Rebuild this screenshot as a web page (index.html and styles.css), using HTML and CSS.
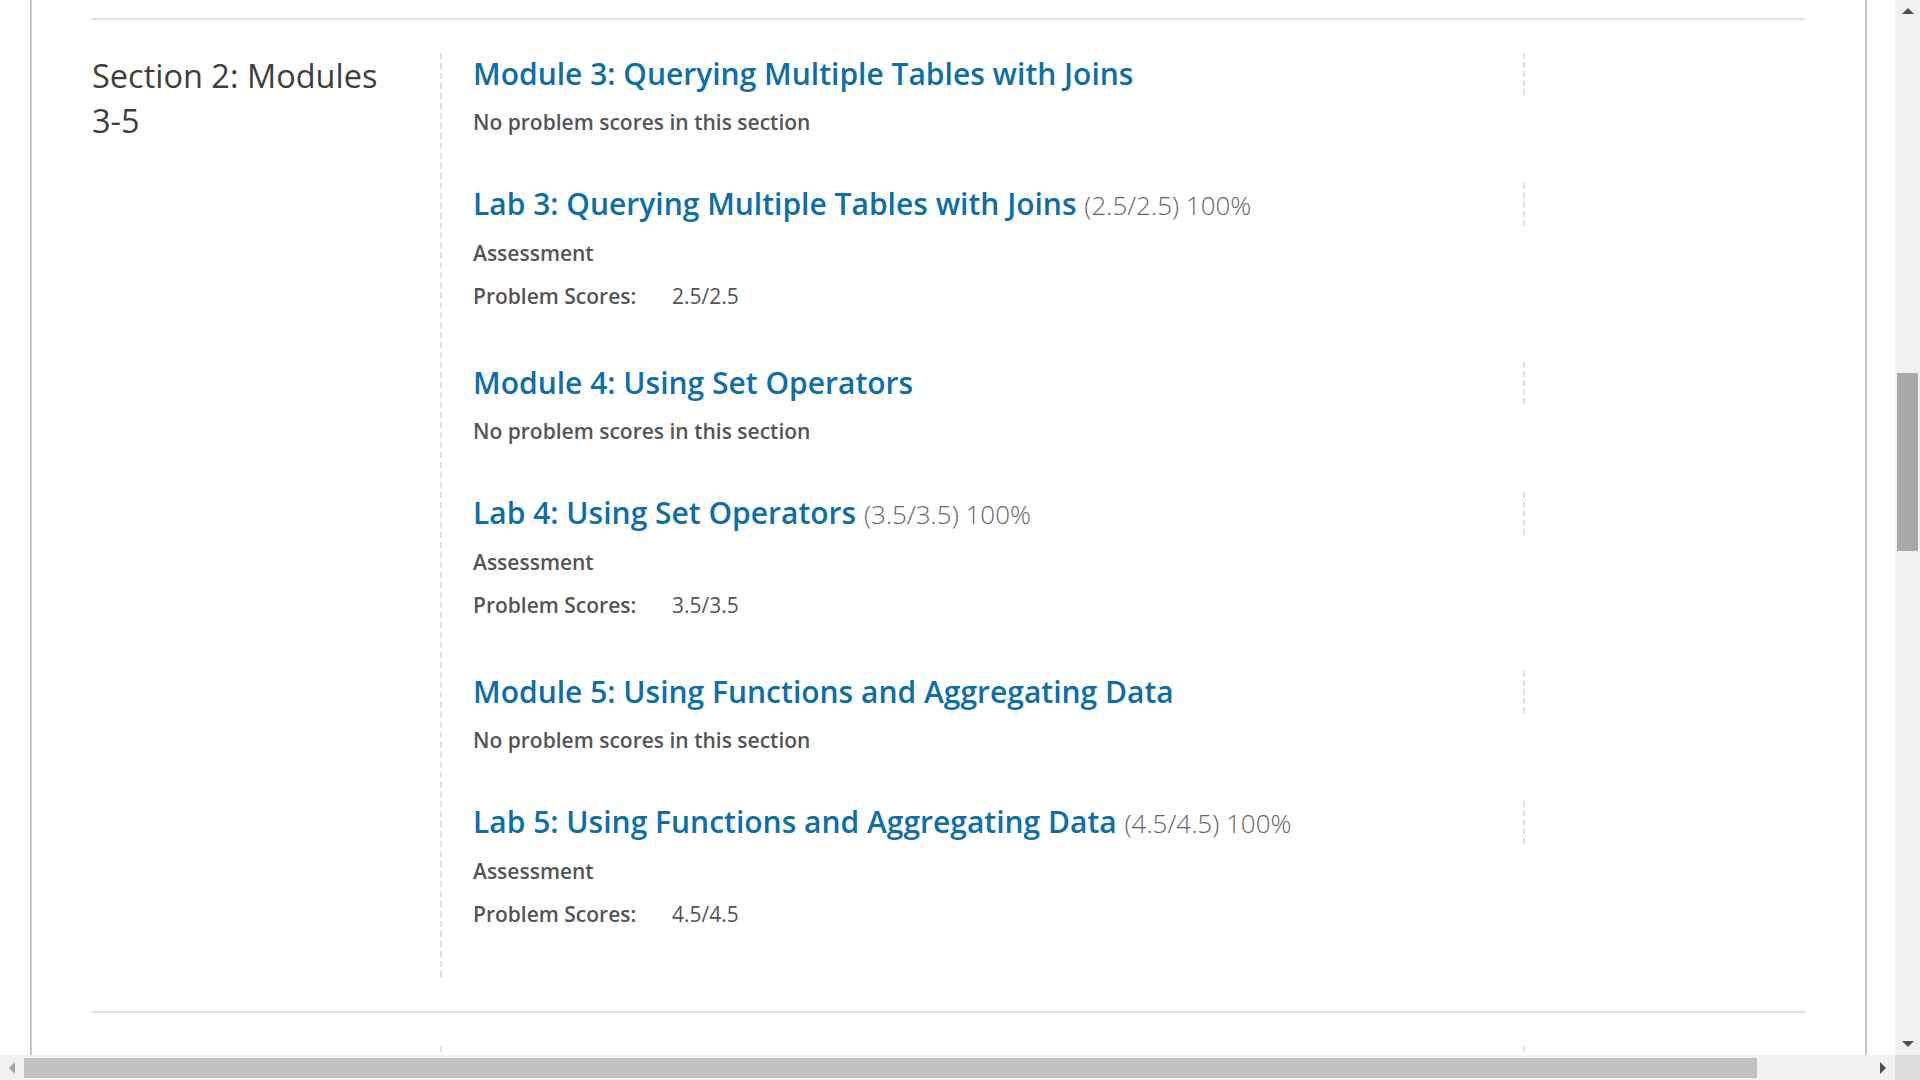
FILE: index.html
```html
<!DOCTYPE html>
<html lang="en">
<head>
<meta charset="utf-8">
<title>Progress</title>
<link rel="stylesheet" href="styles.css">
</head>
<body>
<div class="viewport">
  <div class="page">
    <hr class="rule">
    <section class="chapter">
      <h2 class="chapter-title">Section 2: Modules 3-5</h2>
      <div class="sections">
        <div class="item module">
          <h3 class="item-head"><a href="#">Module 3: Querying Multiple Tables with Joins</a></h3>
          <p class="label">No problem scores in this section</p>
        </div>
        <div class="item lab">
          <h3 class="item-head"><a href="#">Lab 3: Querying Multiple Tables with Joins</a> <span class="score">(2.5/2.5) 100%</span></h3>
          <p class="label">Assessment</p>
          <p class="label scores"><span class="scores-label">Problem Scores:</span><span class="scores-val">2.5/2.5</span></p>
        </div>
        <div class="item module">
          <h3 class="item-head"><a href="#">Module 4: Using Set Operators</a></h3>
          <p class="label">No problem scores in this section</p>
        </div>
        <div class="item lab">
          <h3 class="item-head"><a href="#">Lab 4: Using Set Operators</a> <span class="score">(3.5/3.5) 100%</span></h3>
          <p class="label">Assessment</p>
          <p class="label scores"><span class="scores-label">Problem Scores:</span><span class="scores-val">3.5/3.5</span></p>
        </div>
        <div class="item module">
          <h3 class="item-head"><a href="#">Module 5: Using Functions and Aggregating Data</a></h3>
          <p class="label">No problem scores in this section</p>
        </div>
        <div class="item lab last">
          <h3 class="item-head"><a href="#">Lab 5: Using Functions and Aggregating Data</a> <span class="score">(4.5/4.5) 100%</span></h3>
          <p class="label">Assessment</p>
          <p class="label scores"><span class="scores-label">Problem Scores:</span><span class="scores-val">4.5/4.5</span></p>
        </div>
      </div>
    </section>
    <hr class="rule">
    <section class="chapter">
      <h2 class="chapter-title">Section 3: Modules 6-8</h2>
      <div class="sections">
        <div class="item module">
          <h3 class="item-head"><a href="#">Module 6: Using Subqueries and APPLY</a></h3>
          <p class="label">No problem scores in this section</p>
        </div>
      </div>
    </section>
  </div>
</div>
<div class="vscroll">
  <div class="arrow up"></div>
  <div class="vtrack"><div class="vthumb"></div></div>
  <div class="arrow down"></div>
</div>
<div class="hscroll">
  <div class="arrow left"></div>
  <div class="htrack"><div class="hthumb"></div></div>
  <div class="arrow right"></div>
</div>
<div class="corner"></div>
</body>
</html>
```
FILE: styles.css
```css
html, body {
  margin: 0;
  padding: 0;
  height: 100%;
}
body {
  display: grid;
  grid-template-columns: 1fr 25px;
  grid-template-rows: 1fr 25px;
  height: 100vh;
  overflow: hidden;
  background: #fff;
  font-family: "Open Sans", "Noto Sans", sans-serif;
  color: #505050;
}
.viewport {
  overflow: hidden;
  min-width: 0;
  min-height: 0;
}
.page {
  margin-left: 30px;
  width: 1713px;
  border-left: 2px solid #c8c8c8;
  border-right: 2px solid #c8c8c8;
  padding: 18px 60px 0 60px;
  min-height: 1200px;
}
.rule {
  margin: 0;
  border: 0;
  height: 2px;
  background: #e1e1e1;
}
.chapter {
  display: flex;
  margin: 33px 0 34px 0;
}
.chapter-title {
  width: 348px;
  flex: none;
  margin: 0;
  font-size: 32.5px;
  line-height: 45px;
  font-weight: 400;
  color: #3e3e3e;
  padding-right: 40px;
  box-sizing: border-box;
}
.sections {
  flex: 1;
  border-left: 2px dashed #e0e0e0;
  padding-left: 31px;
  padding-bottom: 48px;
}
.item.module {
  margin-bottom: 46px;
}
.item.lab {
  margin-bottom: 51px;
}
.item.last {
  margin-bottom: 0;
}
.item-head {
  margin: 0 280px 12px 0;
  border-right: 2px dashed #e0e0e0;
  font-size: 30px;
  line-height: 42px;
  font-weight: 600;
  white-space: nowrap;
}
.item-head a {
  color: #0e6ea7;
  text-decoration: none;
}
.score {
  font-size: 26px;
  font-weight: 300;
  color: #666;
}
.label {
  margin: 0;
  font-size: 21px;
  line-height: 30px;
  font-weight: 600;
  color: #555;
}
.label + .label {
  margin-top: 13px;
}
.scores {
  display: flex;
}
.scores-label {
  width: 199px;
}
.scores-val {
  font-weight: 400;
}
.vscroll {
  background: #f1f1f1;
  display: flex;
  flex-direction: column;
}
.vtrack {
  flex: 1;
  padding: 0 2px;
}
.vthumb {
  margin-top: 351px;
  height: 178px;
  background: #a8a8a8;
}
.hscroll {
  background: #f1f1f1;
  display: flex;
  align-items: stretch;
}
.htrack {
  flex: 1;
  padding: 3px 0 2px 0;
}
.hthumb {
  height: 20px;
  width: 1733px;
  background: #c1c1c1;
}
.corner {
  background: #dcdcdc;
}
.arrow {
  flex: none;
  display: flex;
  align-items: center;
  justify-content: center;
}
.arrow.up, .arrow.down {
  height: 22px;
}
.arrow.left, .arrow.right {
  width: 24px;
}
.arrow.up::before {
  content: "";
  border-left: 6px solid transparent;
  border-right: 6px solid transparent;
  border-bottom: 6px solid #505050;
}
.arrow.down::before {
  content: "";
  border-left: 6px solid transparent;
  border-right: 6px solid transparent;
  border-top: 6px solid #505050;
}
.arrow.left::before {
  content: "";
  border-top: 6px solid transparent;
  border-bottom: 6px solid transparent;
  border-right: 6px solid #a3a3a3;
}
.arrow.right::before {
  content: "";
  border-top: 6px solid transparent;
  border-bottom: 6px solid transparent;
  border-left: 6px solid #505050;
}
```
